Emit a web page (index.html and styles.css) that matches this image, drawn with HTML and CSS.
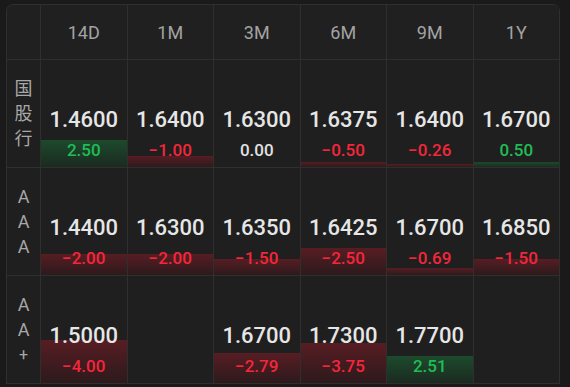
FILE: index.html
```html
<!DOCTYPE html>
<html>
<head>
<meta charset="utf-8">
<link rel="stylesheet" href="styles.css">
</head>
<body>
<div class="table">
  <div class="cell head corner"></div>
  <div class="cell head">14D</div>
  <div class="cell head">1M</div>
  <div class="cell head">3M</div>
  <div class="cell head">6M</div>
  <div class="cell head">9M</div>
  <div class="cell head">1Y</div>

  <div class="cell label"><span>国</span><span>股</span><span>行</span></div>
  <div class="cell data"><div class="bar up" style="height:25%"></div><div class="val">1.4600</div><div class="chg up">2.50</div></div>
  <div class="cell data"><div class="bar down" style="height:10%"></div><div class="val">1.6400</div><div class="chg down">−1.00</div></div>
  <div class="cell data"><div class="val">1.6300</div><div class="chg flat">0.00</div></div>
  <div class="cell data"><div class="bar down" style="height:5%"></div><div class="val">1.6375</div><div class="chg down">−0.50</div></div>
  <div class="cell data"><div class="bar down" style="height:2.6%"></div><div class="val">1.6400</div><div class="chg down">−0.26</div></div>
  <div class="cell data"><div class="bar up" style="height:5%"></div><div class="val">1.6700</div><div class="chg up">0.50</div></div>

  <div class="cell label"><span>A</span><span>A</span><span>A</span></div>
  <div class="cell data"><div class="bar down" style="height:20%"></div><div class="val">1.4400</div><div class="chg down">−2.00</div></div>
  <div class="cell data"><div class="bar down" style="height:20%"></div><div class="val">1.6300</div><div class="chg down">−2.00</div></div>
  <div class="cell data"><div class="bar down" style="height:15%"></div><div class="val">1.6350</div><div class="chg down">−1.50</div></div>
  <div class="cell data"><div class="bar down" style="height:25%"></div><div class="val">1.6425</div><div class="chg down">−2.50</div></div>
  <div class="cell data"><div class="bar down" style="height:6.9%"></div><div class="val">1.6700</div><div class="chg down">−0.69</div></div>
  <div class="cell data"><div class="bar down" style="height:15%"></div><div class="val">1.6850</div><div class="chg down">−1.50</div></div>

  <div class="cell label"><span>A</span><span>A</span><span class="plus">+</span></div>
  <div class="cell data"><div class="bar down" style="height:40%"></div><div class="val">1.5000</div><div class="chg down">−4.00</div></div>
  <div class="cell data"></div>
  <div class="cell data"><div class="bar down" style="height:27.9%"></div><div class="val">1.6700</div><div class="chg down">−2.79</div></div>
  <div class="cell data"><div class="bar down" style="height:37.5%"></div><div class="val">1.7300</div><div class="chg down">−3.75</div></div>
  <div class="cell data"><div class="bar up" style="height:25.1%"></div><div class="val">1.7700</div><div class="chg up">2.51</div></div>
  <div class="cell data"></div>
</div>
</body>
</html>
```

FILE: styles.css
```css
html, body {
  margin: 0;
  background: #1a1a1a;
}
body {
  padding: 4px 0 0 6px;
  font-family: Roboto, "Noto Sans CJK SC", sans-serif;
}
.table {
  width: 554px;
  box-sizing: border-box;
  display: grid;
  grid-template-columns: 34px repeat(6, 1fr);
  grid-template-rows: 55px repeat(3, 108px);
  background: #1f1f1f;
  border-left: 1px solid #2f2f2f;
  border-top: 1px solid #2f2f2f;
  border-radius: 7px 7px 0 0;
  overflow: hidden;
}
.cell {
  box-sizing: border-box;
  border-right: 1px solid #2f2f2f;
  border-bottom: 1px solid #2f2f2f;
  position: relative;
}
.head {
  display: flex;
  align-items: center;
  justify-content: center;
  color: #a3a3a3;
  font-size: 18px;
  background: #202020;
}
.label {
  display: flex;
  flex-direction: column;
  align-items: center;
  justify-content: center;
  color: #a8a8a8;
  font-size: 18px;
  line-height: 25px;
}
.label .plus {
  font-size: 16px;
}
.data {
  display: flex;
  flex-direction: column;
  align-items: center;
  justify-content: flex-end;
  padding-bottom: 6px;
}
.bar {
  position: absolute;
  left: 0;
  right: 0;
  bottom: 0;
  z-index: 0;
}
.bar.down {
  background: linear-gradient(to bottom, #571d23, #2c1a1c);
}
.bar.up {
  background: linear-gradient(to bottom, #1d4a2d, #1b2a20);
}
.val, .chg {
  position: relative;
  z-index: 1;
}
.val {
  color: #e6e6e6;
  font-size: 22px;
  font-weight: 500;
  line-height: 28px;
  margin-bottom: 5px;
}
.chg {
  font-size: 17px;
  font-weight: 500;
  line-height: 22px;
}
.chg.down { color: #f5263a; }
.chg.up { color: #1fbd55; }
.chg.flat { color: #e0e0e0; }
```
